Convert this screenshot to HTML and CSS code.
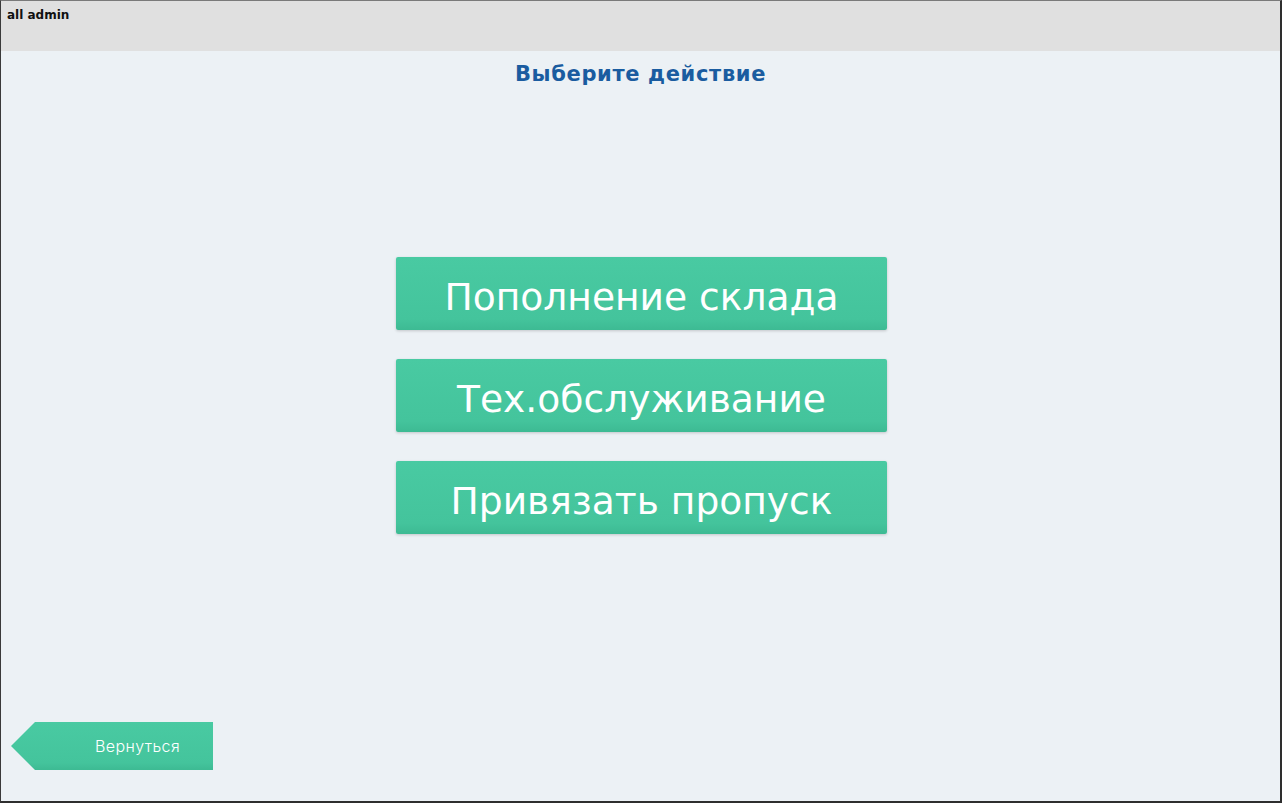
FILE: index.html
```html
<!DOCTYPE html>
<html>
<head>
    <title>Выберите действие</title>
    <link rel="stylesheet" href="styles.css">
</head>
<body>
    <div class="window">
        <div class="topbar">
            <span class="user">all admin</span>
        </div>
        <div class="main">
            <h1 class="title">Выберите действие</h1>
            <div class="actions">
                <button class="action">Пополнение склада</button>
                <button class="action">Тех.обслуживание</button>
                <button class="action">Привязать пропуск</button>
            </div>
            <div class="footer">
                <button class="back">Вернуться</button>
            </div>
        </div>
    </div>
</body>
</html>
```

FILE: styles.css
```css
html, body {
    margin: 0;
    padding: 0;
    height: 100%;
}
body {
    font-family: "DejaVu Sans", sans-serif;
    background-color: #2e2e2e;
}
.window {
    box-sizing: border-box;
    height: 803px;
    border-top: 1px solid #7a7a7a;
    border-left: 1px solid #3a3a3a;
    border-right: 2px solid #2e2e2e;
    border-bottom: 2px solid #2e2e2e;
    display: flex;
    flex-direction: column;
    background-color: #ecf1f5;
}
.topbar {
    height: 50px;
    background-color: #e0e0e0;
    padding: 3px 6px;
    box-sizing: border-box;
}
.user {
    font-size: 12px;
    font-weight: bold;
    color: #111;
}
.main {
    flex: 1;
    display: flex;
    flex-direction: column;
}
.title {
    margin: 11px 0 0;
    text-align: center;
    font-size: 21px;
    font-weight: bold;
    color: #1a5ca0;
    letter-spacing: 0.65px;
}
.actions {
    margin-top: 171px;
    padding-left: 2px;
    display: flex;
    flex-direction: column;
    align-items: center;
    gap: 29px;
}
.action {
    width: 491px;
    height: 73px;
    border: none;
    border-radius: 2px;
    background: linear-gradient(#49caa2, #44c49c 85%, #3dba93);
    box-shadow: 0 1px 3px rgba(0,0,0,0.18);
    color: white;
    font-family: "DejaVu Sans", sans-serif;
    font-size: 37.6px;
    padding: 6px 0 0;
    cursor: pointer;
}
.footer {
    margin-top: auto;
    padding: 0 0 31px 10px;
}
.back {
    width: 202px;
    height: 48px;
    border: none;
    background: linear-gradient(#49caa2, #44c49c 85%, #3dba93);
    clip-path: polygon(24px 0, 100% 0, 100% 100%, 24px 100%, 0 50%);
    color: white;
    font-family: "Inter", sans-serif;
    font-weight: 300;
    font-size: 16px;
    letter-spacing: 0.4px;
    padding: 0 0 0 84px;
    text-align: left;
    cursor: pointer;
}
```
